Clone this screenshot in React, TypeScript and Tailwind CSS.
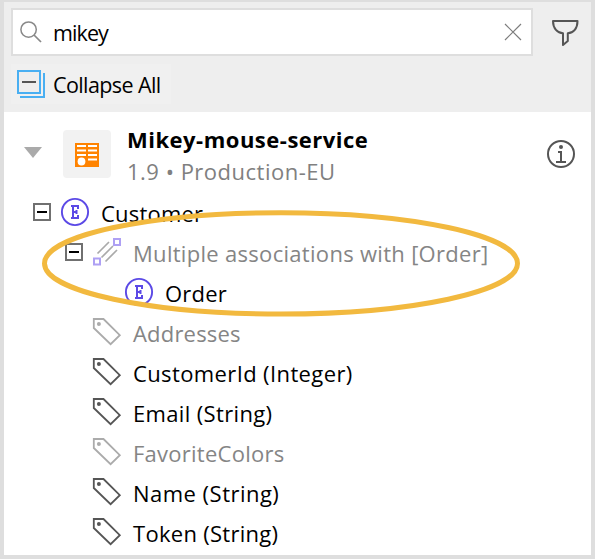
import type { ReactNode } from "react";

function Search() {
  return (
    <svg className="h-6 w-6 shrink-0" viewBox="0 0 24 24" fill="none" stroke="#898989">
      <circle cx="9.6" cy="9.6" r="7.7" strokeWidth="1.5" />
      <path d="M15 15l7 7" strokeWidth="1.7" />
    </svg>
  );
}

function CollapseIcon() {
  return (
    <svg className="h-8 w-8 shrink-0" viewBox="0 0 32 32" fill="none">
      <path d="M29 5v24H5" stroke="#49aff2" strokeWidth="2" />
      <rect x="3" y="3" width="22" height="22" fill="#eee" stroke="#49aff2" strokeWidth="2" />
      <path d="M7 14h14" stroke="#555" strokeWidth="2" />
    </svg>
  );
}

function Tag({ dim }: { dim?: boolean }) {
  return (
    <svg className="h-8 w-8 shrink-0" viewBox="0 0 32 32" fill="none" stroke={dim ? "#ababab" : "#555"} strokeWidth="1.8">
      <path d="M2.800 3h9.700l16.300 16.200-9.200 9L2.800 12z" />
      <circle cx="7.900" cy="7.900" r="2" fill={dim ? "#ababab" : "#555"} stroke="none" />
    </svg>
  );
}

function Entity() {
  return (
    <svg className="h-8 w-8 shrink-0" viewBox="0 0 32 32" fill="none" stroke="#5b49e6">
      <circle cx="16" cy="16" r="13.1" strokeWidth="1.9" />
      <path d="M12 10h7v3M12 22h7v-3M14 10v12M14 16h4M17.500 14v4" strokeWidth="2" />
    </svg>
  );
}

function Association() {
  return (
    <svg className="h-8 w-8 shrink-0" viewBox="0 0 32 32" fill="none">
      <path d="M6.500 17.500L18 6M10.500 21.500L22 10M14.500 25.500L26 14" stroke="#aaa" strokeWidth="1.7" />
      <path d="M23 3h6v6h-6zM3 22.500h6v6H3z" stroke="#aea0f4" strokeWidth="2" fill="#fff" />
    </svg>
  );
}

function Toggle() {
  return (
    <span className="flex h-[18px] w-[18px] shrink-0 items-center justify-center border-2 border-[#707070]">
      <span className="h-0.5 w-2.5 bg-black" />
    </span>
  );
}

function Row({ indent, icon, children, text }: { indent: string; icon: ReactNode; children: ReactNode; text: string }) {
  return (
    <div className={`flex h-10 items-center ${indent}`}>
      {icon}
      <span className={`whitespace-nowrap pt-px ${text}`}>{children}</span>
    </div>
  );
}

const expandable = (icon: ReactNode) => (
  <>
    <Toggle />
    <span className="ml-2 mr-2.5 flex">{icon}</span>
  </>
);

const leaf = (icon: ReactNode) => <span className="mr-2.5 flex">{icon}</span>;

export default function App() {
  return (
    <div className="h-[559px] w-[595px] overflow-hidden bg-[#dedede] pb-1 pl-1 pr-1 pt-0.5 font-['Open_Sans','Noto_Sans',sans-serif] text-[22px] leading-8 text-black">
      <div className="relative h-full bg-white">
        <header className="h-[110px] bg-[#eee] pl-[7px] pt-1.5 text-[21.5px]">
          <div className="flex items-center">
            <div className="flex h-12 w-[522px] items-center border-2 border-[#dedede] bg-white pl-1.5 pr-2">
              <Search />
              <span className="ml-2.5 flex-1 pt-px tracking-[-0.9px]">mikey</span>
              <svg className="h-5 w-5" viewBox="0 0 20 20" stroke="#7d7d7d" strokeWidth="1.2">
                <path d="M2 2l16 16M18 2L2 18" />
              </svg>
            </div>
            <svg className="ml-[18px] h-8 w-8" viewBox="0 0 32 32" fill="none" stroke="#555" strokeWidth="2" strokeLinejoin="round">
              <path d="M2 5h24.500c0 7.500-4 12-9.700 12.200V25L12 29V17.200C6.500 17 2 12.500 2 5z" />
            </svg>
          </div>
          <button className="mt-2 flex h-10 w-40 items-center bg-[#f0f0f0] pl-1">
            <CollapseIcon />
            <span className="ml-1.5 whitespace-nowrap pt-px tracking-[-0.6px]">Collapse All</span>
          </button>
        </header>
        <section className="flex h-20 items-center pl-5 pr-3.5">
          <svg className="h-[11px] w-[18px]" viewBox="0 0 18 11">
            <path d="M0 0h18L9 11z" fill="#aaa" />
          </svg>
          <div className="ml-[21px] mt-1 flex h-12 w-12 items-center justify-center rounded-sm bg-[#f2f2f2]">
            <svg className="mt-0.5 h-6 w-6" viewBox="0 0 24 24">
              <path fill="#ff8300" d="M0 0h24v24H0z" />
              <path d="M2 3h9M13 3h9M2 7.500h9M13 7.500h9M2 12h9M13 12h9M13 16.500h9" stroke="#fff" strokeWidth="2" />
              <circle cx="6.500" cy="18.500" r="3.900" fill="#fff" />
            </svg>
          </div>
          <div className="ml-4 flex-1 whitespace-nowrap pt-1.5">
            <div className="font-bold tracking-[0.5px]">Mikey-mouse-service</div>
            <div className="tracking-[0.5px] text-[#808080]">1.9 • Production-EU</div>
          </div>
          <svg className="h-8 w-8" viewBox="0 0 32 32" fill="none" stroke="#555" strokeWidth="2">
            <circle cx="16" cy="18" r="13" />
            <circle cx="16" cy="11" r="2" fill="#555" stroke="none" />
            <path d="M13 16h3v10M11 26h10" />
          </svg>
        </section>
        <main>
          <Row indent="pl-[29px]" icon={expandable(<Entity />)} text="tracking-[0.2px]">Customer</Row>
          <Row indent="pl-[61px]" icon={expandable(<Association />)} text="tracking-[0.3px] text-[#858585]">Multiple associations with [Order]</Row>
          <Row indent="pl-[119px]" icon={leaf(<Entity />)} text="tracking-[0.2px]">Order</Row>
          <Row indent="pl-[87px]" icon={leaf(<Tag dim />)} text="tracking-[0.2px] text-[#858585]">Addresses</Row>
          <Row indent="pl-[87px]" icon={leaf(<Tag />)} text="tracking-[0.38px]">CustomerId (Integer)</Row>
          <Row indent="pl-[87px]" icon={leaf(<Tag />)} text="tracking-[0.35px]">Email (String)</Row>
          <Row indent="pl-[87px]" icon={leaf(<Tag dim />)} text="tracking-[0.25px] text-[#858585]">FavoriteColors</Row>
          <Row indent="pl-[87px]" icon={leaf(<Tag />)} text="tracking-[0.48px]">Name (String)</Row>
          <Row indent="pl-[87px]" icon={leaf(<Tag />)} text="tracking-[0.28px]">Token (String)</Row>
        </main>
        <svg className="pointer-events-none absolute left-[38px] top-[208px] h-[108px] w-[480px]" viewBox="0 0 480 108" fill="none">
          <ellipse cx="239" cy="53.400" rx="236.500" ry="50.700" stroke="#f2b93f" strokeWidth="5" />
        </svg>
      </div>
    </div>
  );
}
